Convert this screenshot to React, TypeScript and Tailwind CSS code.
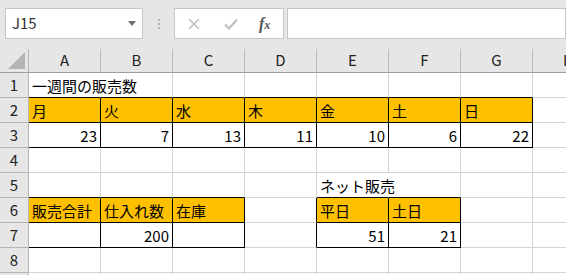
import React from 'react';

const cols = ['A', 'B', 'C', 'D', 'E', 'F', 'G', 'H'];

type Cell = { v?: string; fill?: boolean; right?: boolean; spill?: boolean };

// row -> col -> cell
const data: Record<number, Record<number, Cell>> = {
  1: { 0: { v: '一週間の販売数', spill: true } },
  2: {
    0: { v: '月', fill: true },
    1: { v: '火', fill: true },
    2: { v: '水', fill: true },
    3: { v: '木', fill: true },
    4: { v: '金', fill: true },
    5: { v: '土', fill: true },
    6: { v: '日', fill: true },
  },
  3: {
    0: { v: '23', right: true },
    1: { v: '7', right: true },
    2: { v: '13', right: true },
    3: { v: '11', right: true },
    4: { v: '10', right: true },
    5: { v: '6', right: true },
    6: { v: '22', right: true },
  },
  5: { 4: { v: 'ネット販売', spill: true } },
  6: {
    0: { v: '販売合計', fill: true },
    1: { v: '仕入れ数', fill: true },
    2: { v: '在庫', fill: true },
    4: { v: '平日', fill: true },
    5: { v: '土日', fill: true },
  },
  7: {
    1: { v: '200', right: true },
    4: { v: '51', right: true },
    5: { v: '21', right: true },
  },
};

const boxes = [
  { r1: 2, r2: 3, c1: 0, c2: 6 },
  { r1: 6, r2: 7, c1: 0, c2: 2 },
  { r1: 6, r2: 7, c1: 4, c2: 5 },
];

const inBox = (r: number, c: number) =>
  boxes.some((b) => r >= b.r1 && r <= b.r2 && c >= b.c1 && c <= b.c2);

const font = { fontFamily: '"Noto Sans CJK JP", "Noto Sans", sans-serif' };

function Toolbar() {
  return (
    <div className="h-[49px] bg-[#e6e6e6] flex items-start pt-[8px] pl-[5px]">
      <div className="w-[138px] h-[31px] bg-white border border-[#c6c6c6] flex items-center justify-between pl-[6px] pr-[6px]">
        <span className="text-[15px] text-[#333]" style={font}>J15</span>
        <svg width="8" height="5" viewBox="0 0 8 5"><path d="M0 0h8L4 5z" fill="#6f6f6f" /></svg>
      </div>
      <div className="w-[31px] h-[31px] flex flex-col items-center justify-center gap-[2px]">
        <div className="w-[2px] h-[2px] bg-[#b3b3b3]" />
        <div className="w-[2px] h-[2px] bg-[#b3b3b3]" />
        <div className="w-[2px] h-[2px] bg-[#b3b3b3]" />
      </div>
      <div className="w-[110px] h-[31px] bg-white border border-[#c6c6c6] flex items-center">
        <svg className="ml-[13px]" width="12" height="12" viewBox="0 0 12 12">
          <path d="M1 1l10 10M11 1L1 11" stroke="#bfbfbf" strokeWidth="1.6" />
        </svg>
        <svg className="ml-[24px]" width="14" height="12" viewBox="0 0 14 12">
          <path d="M1 6.5l4 4L13 1.5" stroke="#bfbfbf" strokeWidth="2.2" fill="none" />
        </svg>
        <span className="ml-[21px] text-[16px] italic text-[#555] font-semibold leading-none" style={{ fontFamily: '"Liberation Serif", serif' }}>
          f<span className="text-[12px]">x</span>
        </span>
      </div>
      <div className="ml-[3px] flex-1 h-[31px] bg-white border border-[#c6c6c6]" />
    </div>
  );
}

export default function App() {
  return (
    <div className="w-[566px] h-[275px] overflow-hidden bg-white" style={font}>
      <Toolbar />
      <div className="flex h-[24px] bg-[#e6e6e6] border-b border-[#9e9e9e]">
        <div className="w-[29px] shrink-0 border-r border-[#b4b4b4] relative">
          <svg className="absolute right-[3px] bottom-[3px]" width="17" height="17" viewBox="0 0 17 17">
            <path d="M17 0v17H0z" fill="#b4b4b4" />
          </svg>
        </div>
        {cols.map((c) => (
          <div key={c} className="w-[72px] shrink-0 border-r border-[#bdbdbd] flex items-center justify-center text-[15px] text-[#222]">
            {c}
          </div>
        ))}
      </div>
      {[1, 2, 3, 4, 5, 6, 7, 8, 9].map((r) => (
        <div key={r} className="flex h-[25px]">
          <div className="w-[29px] shrink-0 bg-[#e6e6e6] border-r border-b border-[#b4b4b4] flex items-center justify-center text-[15px] text-[#222]">
            {r}
          </div>
          {cols.map((_, c) => {
            const cell = data[r]?.[c];
            const boxed = inBox(r, c);
            const rightBlack = boxed || inBox(r, c + 1);
            const bottomBlack = boxed || inBox(r + 1, c);
            const hideRight = cell?.spill && !rightBlack;
            return (
              <div
                key={c}
                className={`w-[72px] h-[25px] shrink-0 relative border-r border-b flex items-center ${
                  cell?.fill ? 'bg-[#ffc000]' : ''
                } ${rightBlack ? 'border-r-black' : hideRight ? 'border-r-transparent' : 'border-r-[#d4d4d4]'} ${
                  bottomBlack ? 'border-b-black' : 'border-b-[#d4d4d4]'
                } ${cell?.right ? 'justify-end pr-[3px]' : 'justify-start pl-[3px]'}`}
              >
                {cell?.v && (
                  <span className={`text-[15px] text-black leading-none whitespace-nowrap ${cell.spill ? 'absolute left-[3px] z-10' : ''}`}>
                    {cell.v}
                  </span>
                )}
              </div>
            );
          })}
        </div>
      ))}
    </div>
  );
}
